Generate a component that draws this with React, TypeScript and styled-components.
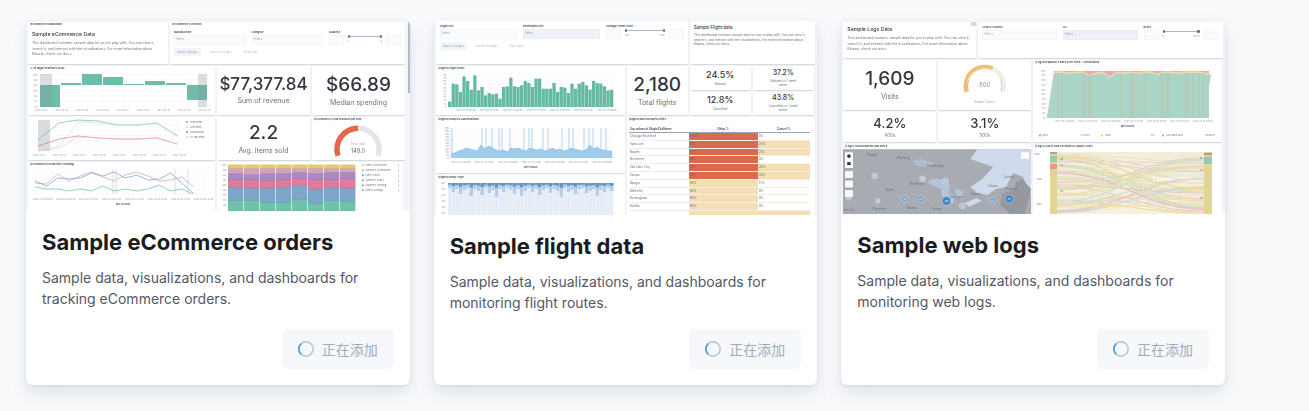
import React from 'react';
import styled, { createGlobalStyle } from 'styled-components';

const GlobalStyle = createGlobalStyle`
    html, body {
        margin: 0;
        padding: 0;
        background: #f9fafc;
        font-family: Inter, "Noto Sans CJK SC", sans-serif;
    }
`;

const GREEN = '#54b399';
const BLUE = '#6092c0';
const PINK = '#d36086';
const PURPLE = '#9170b8';
const LIGHT_PINK = '#ca8eae';
const YELLOW = '#d6bf57';

const arc = (cx: number, cy: number, r: number, from: number, to: number) => {
    const rad = (d: number) => (d * Math.PI) / 180;
    const x0 = cx + r * Math.cos(rad(from));
    const y0 = cy + r * Math.sin(rad(from));
    const x1 = cx + r * Math.cos(rad(to));
    const y1 = cy + r * Math.sin(rad(to));
    return `M${x0} ${y0}A${r} ${r} 0 ${to - from > 180 ? 1 : 0} 1 ${x1} ${y1}`;
};

const line = (xs: number[], ys: number[]) => xs.map((x, i) => `${x},${ys[i]}`).join(' ');

const Ticks = ({ labels, x0, step, y }: { labels: string[]; x0: number; step: number; y: number }) => (
    <g fontSize="2.3" fill="#8f959f">
        {labels.map((l, i) => (
            <text key={i} x={x0 + i * step} y={y}>{l}</text>
        ))}
    </g>
);

const YTicks = ({ n, x, top, bottom, suffix, limit }: { n: number; x: number; top: number; bottom: number; suffix: string; limit?: number }) => (
    <g fontSize="2" fill="#8f959f" textAnchor="end">
        {Array.from({ length: limit ?? n }, (_, i) => (
            <text key={i} x={x} y={top + ((bottom - top) * i) / (n - 1) + 0.7}>
                {Math.round(100 - (100 * i) / (n - 1))}{suffix}
            </text>
        ))}
    </g>
);

const Grid = ({ x0, x1, y0, y1, cols, rows }: { x0: number; x1: number; y0: number; y1: number; cols: number; rows: number }) => (
    <g stroke="#eef0f3" strokeWidth="0.4">
        {Array.from({ length: cols + 1 }, (_, i) => {
            const x = x0 + ((x1 - x0) * i) / (cols || 1);
            return <line key={i} x1={x} x2={x} y1={y0} y2={y1} />;
        })}
        {Array.from({ length: rows + 1 }, (_, i) => {
            const y = y0 + ((y1 - y0) * i) / rows;
            return <line key={i} x1={x0} x2={x1} y1={y} y2={y} />;
        })}
    </g>
);

/* eCommerce */

const RevenueChart = () => {
    const bars = [-22, 2, 11, 8, 1, 4, 2, -15];
    return (
        <Chart viewBox="0 0 187 44">
            <Grid x0={12} x1={180} y0={3} y1={36} cols={8} rows={6} />
            <YTicks n={7} x={10} top={4} bottom={36} suffix="%" />
            {bars.map((b, i) => (
                <rect key={i} x={12 + i * 21} y={b > 0 ? 14 - b : 14} width={20} height={Math.abs(b)} fill={GREEN} opacity={0.85} />
            ))}
            <rect x={12} y={3} width={12} height={33} fill="#8a8f98" opacity={0.3} />
            <rect x={170} y={3} width={9} height={33} fill="#8a8f98" opacity={0.3} />
            <Ticks labels={['2021-07-13', '2021-07-14', '2021-07-15', '2021-07-16', '2021-07-17', '2021-07-18', '2021-07-19', '2021-07-20', '2021-07-21']} x0={7} step={20.4} y={39.5} />
        </Chart>
    );
};

const TrendChart = () => {
    const xs = [10, 31, 50, 70, 90, 110, 129, 149];
    return (
        <Chart viewBox="0 0 187 43">
            <Grid x0={10} x1={150} y0={3} y1={34} cols={7} rows={6} />
            <rect x={10} y={3} width={12} height={31} fill="#8a8f98" opacity={0.3} />
            <polyline points={line(xs, [23, 6, 3, 4, 8, 8, 6, 19])} fill="none" stroke={GREEN} strokeWidth="0.6" />
            <polyline points={line(xs, [34, 29, 5, 6, 8, 8, 6, 18])} fill="none" stroke="#b9e0d4" strokeWidth="0.6" />
            <polyline points={line(xs, [29, 22, 19, 21, 22, 22, 21, 27])} fill="none" stroke={PINK} strokeWidth="0.6" />
            <polyline points={line(xs, [34, 31, 20, 21, 22, 22, 21, 27])} fill="none" stroke="#ecc3d1" strokeWidth="0.6" />
            <Ticks labels={['2021-07-13', '2021-07-14', '2021-07-15', '2021-07-16', '2021-07-17', '2021-07-18', '2021-07-19', '2021-07-20']} x0={5} step={20} y={38.5} />
            <g fontSize="2.4" fill="#69707d">
                {[['Total items', GREEN], ['Last week', '#b9e0d4'], ['Transactions', PINK], ['Tx. last week', '#ecc3d1']].map(([t, c], i) => (
                    <g key={t}>
                        <circle cx={159} cy={5 + i * 5} r={0.9} fill={c} />
                        <text x={162} y={5.8 + i * 5}>{t}</text>
                    </g>
                ))}
            </g>
        </Chart>
    );
};

const PromoChart = () => {
    const xs = Array.from({ length: 15 }, (_, i) => 7 + i * 11.3);
    return (
        <Chart viewBox="0 0 187 47">
            <Grid x0={7} x1={176} y0={6} y1={27} cols={7} rows={5} />
            <g stroke="#8a8f98" strokeWidth="0.5" opacity={0.6}>
                {[85, 88, 147, 160].map((x) => <line key={x} x1={x} x2={x} y1={2} y2={27} />)}
            </g>
            <polyline points={line(xs, [16, 17, 7, 14, 9, 5, 10, 14, 8, 5, 9, 14, 13, 10, 20])} fill="none" stroke={LIGHT_PINK} strokeWidth="0.6" />
            <polyline points={line(xs, [14, 19, 11, 12, 11, 6, 9, 5, 11, 8, 13, 12, 6, 16, 26])} fill="none" stroke={BLUE} strokeWidth="0.6" />
            <polyline points={line(xs, [20, 22, 22, 24, 22, 24, 19, 24, 22, 24, 22, 18, 24, 22, 27])} fill="none" stroke={GREEN} strokeWidth="0.6" />
            <Ticks labels={['2021-07-13 00:00', '2021-07-14 00:00', '2021-07-15 12:00', '2021-07-16 12:00', '2021-07-17 12:00', '2021-07-18 12:00', '2021-07-19 12:00', '2021-07-20 12:00']} x0={5} step={23} y={32.7} />
            <text x={88} y={38} fontSize="2.4" fontWeight="600" fill="#343741">per 12 hours</text>
        </Chart>
    );
};

const Gauge149 = () => (
    <Chart viewBox="0 0 93 38">
        <path d={arc(46, 27.3, 21, 162, 378)} fill="none" stroke="#e2e5ea" strokeWidth="5.4" />
        <path d={arc(46, 27.3, 21, 162, 270)} fill="none" stroke="#e7664c" strokeWidth="5.4" />
        <text x={46} y={23.2} fontSize="2.8" fill="#9ba1ab" textAnchor="middle">Trxns / day</text>
        <text x={46} y={31} fontSize="5.6" fill="#69707d" textAnchor="middle">149.0</text>
    </Chart>
);

const stacks = [
    [4, 5, 6, 8, 13, 16],
    [4, 6, 5, 9, 12, 18],
    [4, 5, 7, 8, 14, 15],
    [4, 5, 6, 8, 15, 16],
    [4, 4, 6, 7, 14, 16],
    [4, 5, 6, 10, 14, 12],
    [4, 4, 7, 8, 13, 18],
    [4, 4, 6, 10, 13, 16],
];

const StackChart = () => {
    const colors = [YELLOW, LIGHT_PINK, PURPLE, PINK, BLUE, GREEN];
    const legend = ["Men's Accessories", "Women's Accessories", "Men's Shoes", "Women's Shoes", "Women's Clothing", "Men's Clothing"];
    return (
        <Chart viewBox="0 0 186 52">
            <YTicks n={11} x={10} top={3} bottom={53} suffix="%" limit={9} />
            {stacks.map((col, i) => {
                let y = 2.5;
                return col.map((h, j) => {
                    const rect = <rect key={`${i}-${j}`} x={11 + i * 16} y={y} width={15.4} height={h + 0.5} fill={colors[j]} opacity={0.82} />;
                    y += h;
                    return rect;
                });
            })}
            <g fontSize="2.4" fill="#69707d">
                {legend.map((t, i) => (
                    <g key={t}>
                        <rect x={145} y={2.5 + i * 5} width={1.6} height={1.6} fill={colors[i]} />
                        <text x={148.5} y={4.2 + i * 5}>{t}</text>
                        <rect x={181} y={2.5 + i * 5} width={0.6} height={2.2} fill="#98a2b3" />
                    </g>
                ))}
            </g>
        </Chart>
    );
};

const Range = ({ min, max }: { min: string; max: string }) => (
    <RangeBox>
        <RangeField />
        <RangeScale>
            <RangeTrack />
            <RangeLabels><span>{min}</span><span>{max}</span></RangeLabels>
        </RangeScale>
        <RangeField />
    </RangeBox>
);

const docsText = 'This dashboard contains sample data for you to play with. You can view it, search it, and interact with the visualizations. For more information about Kibana, check our docs.';

const EcommerceThumb = () => (
    <Dashboard $top={2}>
        <Row $h={42}>
            <Panel $w={140}>
                <PanelTitle>[eCommerce] Markdown</PanelTitle>
                <MarkdownBody $pad={3.5}>
                    <MarkdownTitle>Sample eCommerce Data</MarkdownTitle>
                    <MarkdownText>{docsText}</MarkdownText>
                </MarkdownBody>
            </Panel>
            <Panel $w={235}>
                <PanelTitle>[eCommerce] Controls</PanelTitle>
                <ControlRow>
                    <Control $w={72}><ControlLabel>Manufacturer</ControlLabel><SelectBox>Select...</SelectBox></Control>
                    <Control $w={72}><ControlLabel>Category</ControlLabel><SelectBox>Select...</SelectBox></Control>
                    <Control $w={72}><ControlLabel>Quantity</ControlLabel><Range min="1" max="4" /></Control>
                </ControlRow>
                <ButtonRow>
                    <ApplyBtn>Apply changes</ApplyBtn><GhostBtn>Cancel changes</GhostBtn><GhostBtn>Clear form</GhostBtn>
                </ButtonRow>
            </Panel>
        </Row>
        <Row $h={49}>
            <Panel $w={187}><PanelTitle>% of target revenue ($10k)</PanelTitle><RevenueChart /></Panel>
            <MetricPanel $w={93}><MetricValue $size={17}>$77,377.84</MetricValue><MetricLabel $size={7}>Sum of revenue</MetricLabel></MetricPanel>
            <MetricPanel $w={93}><MetricValue $size={19}>$66.89</MetricValue><MetricLabel $size={7}>Median spending</MetricLabel></MetricPanel>
        </Row>
        <Row $h={43}>
            <Panel $w={187}><TrendChart /></Panel>
            <MetricPanel $w={93}><MetricValue $size={19}>2.2</MetricValue><MetricLabel $size={7}>Avg. items sold</MetricLabel></MetricPanel>
            <Panel $w={93}><PanelTitle>[eCommerce] Sold Products per Day</PanelTitle><Gauge149 /></Panel>
        </Row>
        <Row $h={52}>
            <Panel $w={187}><PanelTitle>[eCommerce] Promotion Tracking</PanelTitle><PromoChart /></Panel>
            <Panel $w={186}><StackChart /></Panel>
        </Row>
        <ScrollThumb />
    </Dashboard>
);

/* flights */

const flightCounts = [16, 70, 68, 45, 92, 78, 52, 95, 50, 60, 35, 42, 38, 40, 25, 60, 62, 88, 62, 60, 65, 78, 72, 60, 85, 85, 55, 55, 55, 72, 45, 60, 58, 42, 70, 55, 70, 75, 65, 52, 78, 72, 70, 62, 50, 52];

const FlightChart = () => (
    <Chart viewBox="0 0 189 44">
        <Grid x0={12} x1={177} y0={3} y1={36} cols={16} rows={10} />
        <YTicks n={11} x={10} top={4} bottom={36} suffix="" />
        {flightCounts.map((h, i) => (
            <rect key={i} x={12 + i * 3.6} y={36 - h / 3} width={3.3} height={h / 3} fill={GREEN} opacity={0.9} />
        ))}
        <Ticks labels={['2021-07-12 00:00', '2021-07-12 12:00', '2021-07-13 00:00', '2021-07-13 12:00', '2021-07-14 00:00', '2021-07-14 12:00', '2021-07-15 00:00']} x0={20} step={23.5} y={39.5} />
    </Chart>
);

const DelayChart = () => {
    const tops = [32, 31, 29, 28, 26, 27, 28, 29, 23, 27, 24, 26, 28, 29, 28, 30, 26, 27, 26, 28, 29, 26, 27, 28, 27, 29, 28, 26, 28, 27, 29, 28, 26, 27, 28, 29, 28, 23, 27, 25, 28, 28, 29, 29];
    const xs = tops.map((_, i) => 15 + i * 3.75);
    const area = `15,36 ${line(xs, tops)} ${xs[xs.length - 1]},36`;
    const marks = [16, 46, 50, 56, 63, 66, 74, 88, 93, 96, 107, 112, 126, 133, 137, 148, 153, 157, 165, 170];
    return (
        <Chart viewBox="0 0 189 51">
            <Grid x0={15} x1={177} y0={6} y1={36} cols={0} rows={10} />
            <YTicks n={11} x={14} top={6} bottom={36} suffix="%" />
            <g stroke="#94bfe4" strokeWidth="0.7">
                {marks.map((x) => <line key={x} x1={x} x2={x} y1={6} y2={36} />)}
            </g>
            <polygon points={area} fill="#9fcbec" />
            <polyline points={line(xs, tops)} fill="none" stroke="#6fb0e0" strokeWidth="0.5" />
            <Ticks labels={['2021-07-12 00:00', '2021-07-12 12:00', '2021-07-13 00:00', '2021-07-13 12:00', '2021-07-14 00:00', '2021-07-14 12:00', '2021-07-15 00:00']} x0={15} step={23.5} y={41} />
            <text x={88} y={46} fontSize="2.4" fontWeight="600" fill="#343741">per 6 hours</text>
        </Chart>
    );
};

const DelayTypeChart = () => {
    const depths = [5, 9, 6, 11, 7, 5, 13, 6, 8, 12, 5, 10, 7, 14, 6, 9, 5, 7, 11, 6, 13, 8, 5, 9, 6, 12, 7, 5, 10, 6, 8, 14, 5, 9, 7, 11, 6, 5, 10, 8, 6, 13, 7, 9, 5, 8];
    return (
        <Chart viewBox="0 0 189 47">
            <YTicks n={11} x={10} top={3} bottom={63} suffix="%" limit={6} />
            {depths.map((d, i) => (
                <g key={i}>
                    <rect x={12 + i * 3.6} y={3} width={3.5} height={44} fill="#e6edf6" />
                    <rect x={12 + i * 3.6} y={3} width={3.5} height={d} fill="#b4cde8" />
                    <rect x={12 + i * 3.6} y={3} width={3.5} height={d / 3} fill="#5f93c9" />
                </g>
            ))}
        </Chart>
    );
};

const cityRows: [string, string, string, boolean, boolean][] = [
    ['Chicago/Rockford', '100%', '0%', true, false],
    ['Syracuse', '75%', '25%', true, true],
    ['Naples', '71%', '21%', true, true],
    ['Rochester', '69%', '0%', true, false],
    ['Salt Lake City', '60%', '20%', true, true],
    ['Tampa', '60%', '20%', true, true],
    ['Bangor', '50%', '17%', false, false],
    ['Belleville', '50%', '0%', false, false],
    ['Birmingham', '50%', '0%', false, false],
    ['Buffalo', '50%', '0%', false, false],
    ['', '', '', false, true],
];

const CityTable = () => (
    <CityGrid>
        <HeadCell>Top values of OriginCityName</HeadCell>
        <HeadCell $center>Delay %</HeadCell>
        <HeadCell $center>Cancel %</HeadCell>
        {cityRows.map(([name, delay, cancel, hot, warm], i) => (
            <React.Fragment key={i}>
                <NameCell>{name}</NameCell>
                <ValueCell $bg={hot ? '#d9694f' : '#f3deb6'}>{delay}</ValueCell>
                <ValueCell $bg={warm ? '#f3deb6' : '#fff'}>{cancel}</ValueCell>
            </React.Fragment>
        ))}
    </CityGrid>
);

const SmallMetric = ({ value, label, size }: { value: string; label: string; size: number }) => (
    <MetricPanel $w={61}>
        <MetricValue $size={size}>{value}</MetricValue>
        <SmallLabel>{label}</SmallLabel>
    </MetricPanel>
);

const FlightsThumb = () => (
    <Dashboard $top={1}>
        <Row $h={43}>
            <Panel $w={252}>
                <ControlRow>
                    <Control $w={78}><ControlLabel>Origin City</ControlLabel><SelectBox>Select...</SelectBox></Control>
                    <Control $w={78}><ControlLabel>Destination City</ControlLabel><SelectBox $disabled>Select...</SelectBox></Control>
                    <Control $w={78}><ControlLabel>Average Ticket Price</ControlLabel><Range min="100" max="1200" /></Control>
                </ControlRow>
                <ButtonRow>
                    <ApplyBtn>Apply changes</ApplyBtn><GhostBtn>Cancel changes</GhostBtn><GhostBtn>Clear form</GhostBtn>
                </ButtonRow>
            </Panel>
            <Panel $w={125}>
                <MarkdownBody $pad={2.5}>
                    <MarkdownTitle $small>Sample Flight data</MarkdownTitle>
                    <MarkdownText $small>{docsText}</MarkdownText>
                </MarkdownBody>
            </Panel>
        </Row>
        <Row $h={49}>
            <Panel $w={189}><PanelTitle>[Flights] Flight count</PanelTitle><FlightChart /></Panel>
            <MetricPanel $w={61}><MetricValue $size={19}>2,180</MetricValue><MetricLabel $size={7}>Total flights</MetricLabel></MetricPanel>
            <MetricGrid $w={125}>
                <SmallMetric value="24.5%" label="Delayed" size={9} />
                <SmallMetric value="37.2%" label="Delayed vs 1 week earlier" size={7} />
                <SmallMetric value="12.8%" label="Cancelled" size={9} />
                <SmallMetric value="43.8%" label="Cancelled vs 1 week earlier" size={7} />
            </MetricGrid>
        </Row>
        <Row $h={110}>
            <Stack $w={189}>
                <Panel $h={56}><PanelTitle>[Flights] Delays &amp; Cancellations</PanelTitle><DelayChart /></Panel>
                <Panel $h={52}><PanelTitle>[Flights] Delay Type</PanelTitle><DelayTypeChart /></Panel>
            </Stack>
            <Panel $w={188}><PanelTitle>[Flights] Most Delayed Cities</PanelTitle><CityTable /></Panel>
        </Row>
    </Dashboard>
);

/* web logs */

const VisitorGauge = () => (
    <Chart viewBox="0 0 93 50">
        <path d={arc(46.7, 26, 19.5, 162, 378)} fill="none" stroke="#eeeeea" strokeWidth="3.4" />
        <path d={arc(46.7, 26, 19.5, 162, 295)} fill="none" stroke="#ecc06c" strokeWidth="3.4" />
        <path d={arc(46.7, 26, 17.2, 162, 200)} fill="none" stroke="#d9694f" strokeWidth="0.6" />
        <path d={arc(46.7, 26, 17.2, 200, 340)} fill="none" stroke="#ecc06c" strokeWidth="0.4" />
        <path d={arc(46.7, 26, 17.2, 340, 378)} fill="none" stroke="#7fc08f" strokeWidth="0.6" />
        <text x={46.7} y={27} fontSize="6" fill="#8f959f" textAnchor="middle">800</text>
        <text x={46.7} y={42.5} fontSize="3" fill="#9ba1ab" textAnchor="middle">Unique Visitors</text>
    </Chart>
);

const ResponseChart = () => {
    const xs = Array.from({ length: 25 }, (_, i) => 16 + i * 6.75);
    const tops = [4, 3, 3, 4, 3, 3, 6, 4, 3, 8, 3, 4, 3, 4, 3, 3, 5, 3, 3, 4, 3, 3, 3, 4, 5];
    const marks = [25, 29, 50, 52, 56, 58, 88, 98, 100, 103, 112, 128, 130, 134, 136, 152, 155, 160, 166, 170];
    return (
        <Chart viewBox="0 0 189 77">
            <Grid x0={14} x1={176} y0={6} y1={53} cols={0} rows={10} />
            <YTicks n={11} x={13} top={6} bottom={53} suffix="%" />
            <polygon points="14,53 21,6 176,6 176,30" fill="#e9a9b9" />
            <polygon points={`14,53 21,7 ${line(xs.slice(1), tops.map((t) => t + 3.6).slice(1))} 176,14 176,53`} fill="#f0dfa9" />
            <polygon points={`14,53 21,9 ${line(xs.slice(1), tops.map((t) => t + 5).slice(1))} 176,22 176,53`} fill="#a9d6c7" />
            <g stroke="#d89a88" strokeWidth="0.6" opacity={0.6}>
                {marks.map((x) => <line key={x} x1={x} x2={x} y1={8} y2={53} />)}
            </g>
            <Ticks labels={['2021-07-13 00:00', '2021-07-13 12:00', '2021-07-14 00:00', '2021-07-14 12:00', '2021-07-15 00:00', '2021-07-15 12:00', '2021-07-16 00:00']} x0={22} step={23} y={57} />
            <text x={88} y={62} fontSize="2.4" fontWeight="600" fill="#343741">per 6 hours</text>
            <g fontSize="2.4" fill="#69707d">
                <circle cx={7} cy={70.5} r={0.9} fill={PINK} />
                <text x={9} y={71.3}>500s</text>
                <text x={48} y={71.3}>11.333%</text>
                <circle cx={69} cy={70.5} r={0.9} fill="#e6c220" />
                <text x={72} y={71.3}>400s</text>
                <text x={118} y={71.3}>0%</text>
                <circle cx={130} cy={70.5} r={0.9} fill={GREEN} />
                <text x={133} y={71.3}>200s and 300s</text>
                <text x={172} y={71.3}>88.667%</text>
            </g>
        </Chart>
    );
};

const clusters: [number, number, number, string][] = [
    [32, 27, 3, '7'], [80, 30, 3, '12'], [103, 32, 3.2, '9'], [62, 50, 3.5, '41'], [78, 50, 3.6, '33'],
    [104, 52, 4.4, '300'], [150, 52, 3.5, '60'], [167, 50, 4.2, '157'], [6, 49, 2.4, '2'], [35, 52, 2.4, '3'], [120, 57, 3, '5'],
];

const LogsMap = () => (
    <Chart viewBox="0 0 189 67">
        <rect width="189" height="67" fill="#a8abb1" />
        <path d="M135 0H189V46L181 28L171 24L164 38L154 40L145 46L135 44L128 38L140 30L151 18L128 10Z" fill="#cfdbec" />
        <path d="M189 40L180 30L174 33L172 40L160 45L158 56L170 67L182 67Z" fill="#95989e" />
        <path d="M98 30L108 36L106 44L112 46L112 54L104 55L100 48L98 40L85 34L88 30Z" fill="#b3c3da" />
        <path d="M112 39L121 42L120 50L114 48Z" fill="#b3c3da" />
        <path d="M122 54L135 49L139 52L127 58Z" fill="#cfdbec" />
        <path d="M70 12L78 10L92 14L84 18L74 17Z" fill="#b3c3da" opacity="0.75" />
        <g fontSize="2.9" fill="#6c7078">
            <text x="25" y="7">Regina</text>
            <text x="54" y="10">Winnipeg</text>
            <text x="84" y="18">Thunder Bay</text>
            <text x="162" y="29">Québec</text>
            <text x="146" y="38">Ottawa</text>
            <text x="67" y="36">Minnesota</text>
            <text x="43" y="42">Pierre</text>
            <text x="108" y="49">Michigan</text>
            <text x="128" y="46">Toronto</text>
            <text x="163" y="41">Portland</text>
            <text x="29" y="61">Cheyenne</text>
            <text x="64" y="60">Omaha</text>
            <text x="88" y="61">Chicago</text>
            <text x="1" y="62">ver City</text>
        </g>
        {clusters.map(([x, y, r, t]) => (
            <g key={t + x}>
                <circle cx={x} cy={y} r={r} fill={r > 4 ? '#3f84c4' : r > 3.3 ? '#7ca4cf' : '#b6c3d1'} stroke="#d7e2ee" strokeWidth="0.5" />
                <text x={x} y={y + 0.8} fontSize="2.2" fill="#fff" textAnchor="middle">{t}</text>
            </g>
        ))}
        <rect x={2} y={3} width={8} height={16} rx={0.5} fill="#fff" />
        <circle cx={6} cy={7} r={1.8} fill="#343741" />
        <rect x={4.2} y={13} width={3.6} height={3} fill="#343741" />
        {[22, 31.5, 41].map((y) => <rect key={y} x={2} y={y} width={8} height={7} rx={0.5} fill="#f5f7fa" />)}
        <rect x={179} y={3} width={8} height={7} rx={0.5} fill="#fff" />
    </Chart>
);

const ribbonColors = ['#d6bf57', '#e7b98a', '#ca8eae', '#94cbb6', '#d6bf57', '#9fb5d4', '#e7b98a', '#c8d7a6'];

const Sankey = () => (
    <Chart viewBox="0 0 189 67">
        <rect x={24} y={3} width={147} height={64} fill="#f3ecd3" opacity={0.75} />
        <rect x={120} y={28} width={51} height={5} fill="#fff" opacity={0.8} />
        <g fill="none" opacity={0.42}>
            {Array.from({ length: 46 }, (_, i) => {
                const a = ((i * 17) % 62) + 4;
                const b = ((i * 29) % 62) + 4;
                return <path key={i} d={`M24 ${a}C90 ${a} 105 ${b} 171 ${b}`} stroke={ribbonColors[i % 8]} strokeWidth={0.4 + (i % 5) * 0.35} />;
            })}
        </g>
        <rect x={17} y={3} width={7} height={64} fill="#e2d58f" />
        <rect x={17} y={3} width={7} height={2} fill={LIGHT_PINK} />
        <rect x={17} y={7} width={7} height={6} fill="#94cbb6" />
        <rect x={17} y={15} width={7} height={5} fill="#e5998d" />
        <rect x={171} y={3} width={8} height={64} fill="#e2d58f" />
        <rect x={171} y={4} width={8} height={2} fill={PURPLE} opacity={0.6} />
        <rect x={171} y={8} width={8} height={7} fill="#94cbb6" />
        <g fontSize="2.2" fill="#69707d">
            <text x={1} y={6}>1,800</text>
            <text x={3} y={31}>1,400</text>
            <text x={3} y={56}>1,000</text>
            <text x={27} y={11}>CN</text>
            <text x={27} y={17}>US</text>
            <text x={27} y={43}>CN</text>
            <text x={167} y={10}>IN</text>
            <text x={167} y={22}>US</text>
            <text x={167} y={50}>CN</text>
        </g>
    </Chart>
);

const LogsThumb = () => (
    <Dashboard $top={2}>
        <Row $h={36}>
            <Panel $w={133}>
                <PanelMenu />
                <MarkdownBody $pad={3.5}>
                    <MarkdownTitle>Sample Logs Data</MarkdownTitle>
                    <MarkdownText>{docsText}</MarkdownText>
                </MarkdownBody>
            </Panel>
            <Panel $w={245}>
                <ControlRow>
                    <Control $w={75}><ControlLabel>Source Country</ControlLabel><SelectBox>Select...</SelectBox></Control>
                    <Control $w={75}><ControlLabel>OS</ControlLabel><SelectBox $disabled>Select...</SelectBox></Control>
                    <Control $w={75}><ControlLabel>Bytes</ControlLabel><Range min="0" max="19730" /></Control>
                </ControlRow>
            </Panel>
        </Row>
        <Row $h={82}>
            <Stack $w={188}>
                <Row $h={50}>
                    <MetricPanel $w={93}><MetricValue $size={19}>1,609</MetricValue><MetricLabel $size={7}>Visits</MetricLabel></MetricPanel>
                    <Panel $w={93}><VisitorGauge /></Panel>
                </Row>
                <Row $h={30}>
                    <MetricPanel $w={93}><MetricValue $size={13}>4.2%</MetricValue><MetricLabel $size={4.5}>400s</MetricLabel></MetricPanel>
                    <MetricPanel $w={93}><MetricValue $size={13}>3.1%</MetricValue><MetricLabel $size={4.5}>500s</MetricLabel></MetricPanel>
                </Row>
            </Stack>
            <Panel $w={189}><PanelTitle>[Logs] Response Codes Over Time + Annotations</PanelTitle><ResponseChart /></Panel>
        </Row>
        <Row $h={72}>
            <Panel $w={188}><PanelTitle>[Logs] Total Requests and Bytes</PanelTitle><LogsMap /></Panel>
            <Panel $w={189}><PanelTitle>[Logs] Source and Destination Sankey Chart</PanelTitle><Sankey /></Panel>
        </Row>
    </Dashboard>
);

interface ISample {
    title: string;
    text: string;
    height: number;
    thumb: React.ReactNode;
}

const samples: ISample[] = [
    { title: 'Sample eCommerce orders', text: 'Sample data, visualizations, and dashboards for tracking eCommerce orders.', height: 191, thumb: <EcommerceThumb /> },
    { title: 'Sample flight data', text: 'Sample data, visualizations, and dashboards for monitoring flight routes.', height: 195, thumb: <FlightsThumb /> },
    { title: 'Sample web logs', text: 'Sample data, visualizations, and dashboards for monitoring web logs.', height: 194, thumb: <LogsThumb /> },
];

const Spinner = () => (
    <SpinnerSvg viewBox="0 0 16 16">
        <circle cx="8" cy="8" r="7.2" fill="none" stroke="#b8c2d2" strokeWidth="1.5" />
        <path d={arc(8, 8, 7.2, 130, 230)} fill="none" stroke="#3f9ae0" strokeWidth="1.5" />
    </SpinnerSvg>
);

export default function App() {
    return (
        <Page>
            <GlobalStyle />
            {samples.map((s) => (
                <Card key={s.title}>
                    <Thumb $h={s.height}>{s.thumb}</Thumb>
                    <Body>
                        <Title>{s.title}</Title>
                        <Text>{s.text}</Text>
                    </Body>
                    <Footer>
                        <AddingBtn><Spinner /><AddingLabel>正在添加</AddingLabel></AddingBtn>
                    </Footer>
                </Card>
            ))}
        </Page>
    );
}

const Page = styled.div`
    display: flex;
    gap: 24px;
    width: 1199px;
    height: 411px;
    box-sizing: border-box;
    padding: 20px 0 26px;
    margin-left: 26px;
`;

const Card = styled.div`
    flex: 1;
    display: flex;
    flex-direction: column;
    background: #fff;
    border-radius: 6px;
    overflow: hidden;
    box-shadow: 0 1px 3px rgba(152, 162, 179, 0.22), 0 6px 14px rgba(152, 162, 179, 0.2), 0 14px 26px rgba(152, 162, 179, 0.08);
`;

const Thumb = styled.div<{ $h: number }>`
    height: ${(p) => p.$h}px;
    flex: none;
    overflow: hidden;
`;

const Body = styled.div`
    flex: 1;
    padding: 19px 16px 0;
`;

const Title = styled.h3`
    margin: 0;
    font-size: 22px;
    line-height: 24px;
    font-weight: 700;
    color: #1a1c21;
`;

const Text = styled.p`
    margin: 13px 0 0;
    font-size: 14px;
    line-height: 21px;
    color: #535966;
`;

const Footer = styled.div`
    display: flex;
    justify-content: flex-end;
    padding: 0 16px 16px;
`;

const AddingBtn = styled.div`
    display: flex;
    align-items: center;
    gap: 8px;
    height: 40px;
    padding: 0 16px;
    border-radius: 6px;
    background: #f5f7fa;
    color: #a2abba;
    font-size: 14px;
`;

const AddingLabel = styled.span`
    margin-top: -1px;
`;

const SpinnerSvg = styled.svg`
    width: 16px;
    height: 16px;
`;

const Dashboard = styled.div<{ $top: number }>`
    position: relative;
    display: flex;
    flex-direction: column;
    gap: 2px;
    height: 100%;
    padding: ${(p) => p.$top}px 2px 0;
    box-sizing: border-box;
    background: #f3f5f8;
    filter: blur(0.45px);
`;

const Row = styled.div<{ $h: number }>`
    display: flex;
    gap: 2px;
    flex: none;
    height: ${(p) => p.$h}px;
`;

const Stack = styled.div<{ $w: number }>`
    display: flex;
    flex-direction: column;
    gap: 2px;
    width: ${(p) => p.$w}px;
`;

const Panel = styled.div<{ $w?: number; $h?: number }>`
    position: relative;
    display: flex;
    flex-direction: column;
    flex: none;
    width: ${(p) => (p.$w ? `${p.$w}px` : 'auto')};
    height: ${(p) => (p.$h ? `${p.$h}px` : '100%')};
    background: #fff;
    overflow: hidden;
    box-shadow: 0 0.5px 1px rgba(105, 112, 125, 0.2);
`;

const PanelMenu = styled.div`
    position: absolute;
    top: 0;
    right: 0;
    width: 5px;
    height: 4px;
    background: #d3d6dc;
`;

const PanelTitle = styled.div`
    flex: none;
    height: 5px;
    padding: 0.8px 2px 0;
    box-sizing: border-box;
    font-size: 2.7px;
    line-height: 3.2px;
    font-weight: 600;
    color: #343741;
    white-space: nowrap;
`;

const Chart = styled.svg`
    display: block;
    flex: 1;
    min-height: 0;
    width: 100%;
`;

const MetricPanel = styled(Panel)`
    align-items: center;
    justify-content: center;
    text-align: center;
`;

const MetricGrid = styled.div<{ $w: number }>`
    display: grid;
    grid-template-columns: 61px 61px;
    grid-template-rows: 23.5px 23.5px;
    gap: 2px;
    width: ${(p) => p.$w}px;
`;

const MetricValue = styled.div<{ $size: number }>`
    font-size: ${(p) => p.$size}px;
    line-height: 1.15;
    font-weight: 500;
    color: #343741;
`;

const MetricLabel = styled.div<{ $size: number }>`
    margin-top: ${(p) => p.$size * 0.45}px;
    font-size: ${(p) => p.$size}px;
    line-height: 1.25;
    color: #69707d;
    white-space: nowrap;
`;

const SmallLabel = styled.div`
    margin-top: 1.5px;
    max-width: 30px;
    font-size: 3px;
    line-height: 4px;
    color: #69707d;
`;

const MarkdownBody = styled.div<{ $pad: number }>`
    padding: ${(p) => p.$pad}px 4px 0;
`;

const MarkdownTitle = styled.div<{ $small?: boolean }>`
    font-size: ${(p) => (p.$small ? 4.4 : 5.2)}px;
    line-height: 7px;
    font-weight: 500;
    color: #343741;
`;

const MarkdownText = styled.div<{ $small?: boolean }>`
    margin-top: ${(p) => (p.$small ? 2.5 : 3.8)}px;
    font-size: ${(p) => (p.$small ? 3.2 : 3.5)}px;
    line-height: ${(p) => (p.$small ? 4.7 : 5.3)}px;
    color: #69707d;
`;

const ControlRow = styled.div`
    display: flex;
    gap: 5.6px;
    padding: 3px 4px 0;
`;

const Control = styled.div<{ $w: number }>`
    width: ${(p) => p.$w}px;
`;

const ControlLabel = styled.div`
    margin-bottom: 1px;
    font-size: 2.7px;
    line-height: 4px;
    font-weight: 600;
    color: #343741;
`;

const SelectBox = styled.div<{ $disabled?: boolean }>`
    height: 9.5px;
    padding: 0 2px;
    font-size: 2.8px;
    line-height: 9.5px;
    color: #98a2b3;
    background: ${(p) => (p.$disabled ? '#eef1f6' : '#fafbfd')};
    box-shadow: inset 0 0 0 0.3px #e2e6ee;
`;

const RangeBox = styled.div`
    display: flex;
    align-items: flex-start;
    gap: 4px;
`;

const RangeField = styled.div`
    flex: none;
    width: 15px;
    height: 9.5px;
    background: #fafbfd;
    box-shadow: inset 0 0 0 0.3px #e2e6ee;
`;

const RangeScale = styled.div`
    flex: 1;
    padding-top: 1px;
`;

const RangeTrack = styled.div`
    position: relative;
    height: 0.8px;
    background: #a9b6d0;

    &::before,
    &::after {
        content: '';
        position: absolute;
        top: -0.7px;
        width: 2.2px;
        height: 2.2px;
        border-radius: 50%;
        background: #69707d;
    }

    &::before {
        left: 0;
    }

    &::after {
        right: 0;
    }
`;

const RangeLabels = styled.div`
    display: flex;
    justify-content: space-between;
    margin-top: 3px;
    font-size: 2.4px;
    color: #8f959f;
`;

const ButtonRow = styled.div`
    display: flex;
    align-items: center;
    gap: 5px;
    padding: 3px 4px 0;
`;

const ApplyBtn = styled.div`
    padding: 0 3px;
    height: 8.5px;
    font-size: 3px;
    line-height: 8.5px;
    color: #a2abba;
    background: #f1f4f8;
`;

const GhostBtn = styled.div`
    padding: 0 3px;
    font-size: 3px;
    color: #b7bdc8;
`;

const ScrollThumb = styled.div`
    position: absolute;
    top: 0;
    right: 0;
    width: 2px;
    height: 73px;
    background: #b4b9c2;
`;

const CityGrid = styled.div`
    display: grid;
    grid-template-columns: 60px 69px 52px;
    grid-template-rows: 8.7px;
    grid-auto-rows: 7.77px;
    margin: 2.5px 2px 0;
    font-size: 3.1px;
    color: #69707d;
`;

const HeadCell = styled.div<{ $center?: boolean }>`
    padding: 0 1px;
    font-size: 2.9px;
    line-height: 8px;
    font-weight: 600;
    text-align: ${(p) => (p.$center ? 'center' : 'left')};
    color: #343741;
    white-space: nowrap;
    border-bottom: 0.7px solid #98a2b3;
`;

const NameCell = styled.div`
    padding: 0 1px;
    line-height: 7.4px;
    border-bottom: 0.3px solid #eceff3;
    white-space: nowrap;
`;

const ValueCell = styled.div<{ $bg: string }>`
    padding: 0 1px;
    line-height: 7.4px;
    background: ${(p) => p.$bg};
    border-bottom: 0.3px solid #f5f0e4;
`;
